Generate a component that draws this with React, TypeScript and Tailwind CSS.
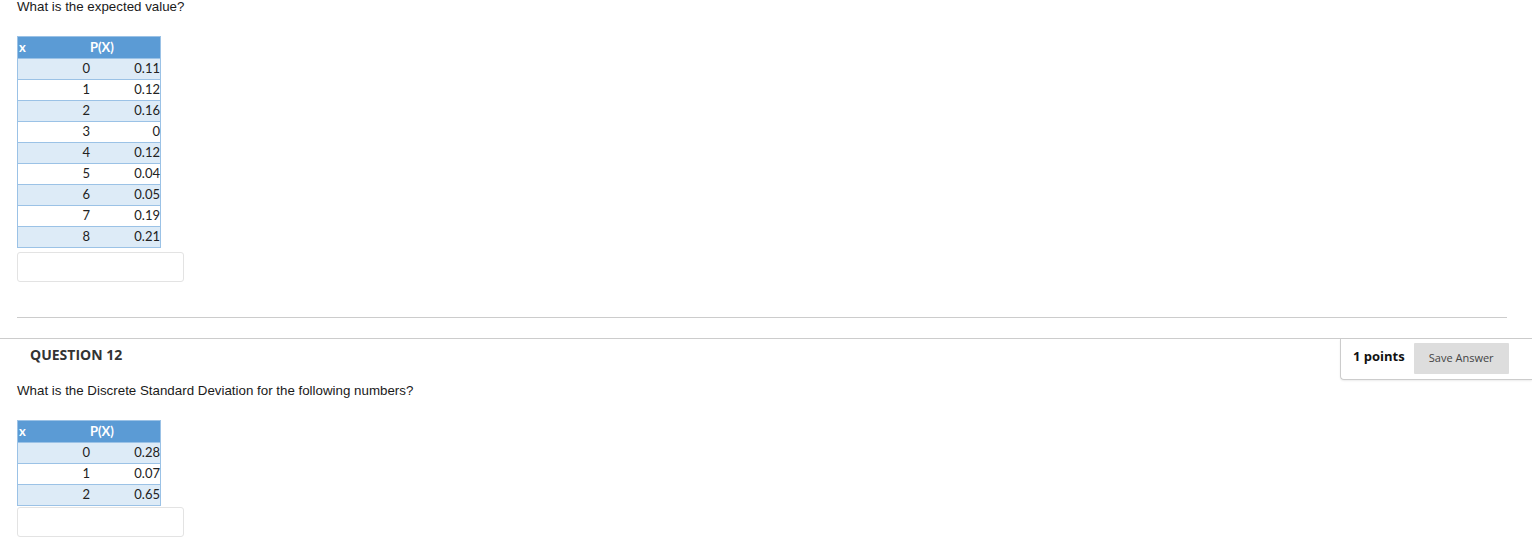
import React from "react";

const t1: [string, string][] = [
  ["0", "0.11"], ["1", "0.12"], ["2", "0.16"], ["3", "0"], ["4", "0.12"],
  ["5", "0.04"], ["6", "0.05"], ["7", "0.19"], ["8", "0.21"],
];
const t2: [string, string][] = [["0", "0.28"], ["1", "0.07"], ["2", "0.65"]];

function PTable({ rows }: { rows: [string, string][] }) {
  return (
    <div className="w-[144px] border border-[#9bc2e6] text-[13px] text-[#222] font-['Lato','Open_Sans',sans-serif]">
      <div className="flex h-[21px] items-center bg-[#5b9bd5] font-bold text-white">
        <div className="w-[72px] pl-[1px]">x</div>
        <div className="pl-[0px]">P(X)</div>
      </div>
      {rows.map(([x, p], i) => (
        <div
          key={i}
          className={
            "flex h-[21px] items-center border-t border-[#9bc2e6] " +
            (i % 2 === 0 ? "bg-[#ddebf7]" : "bg-white")
          }
        >
          <div className="w-[72px] text-right">{x}</div>
          <div className="flex-1 text-right">{p}</div>
        </div>
      ))}
    </div>
  );
}

function AnswerBox() {
  return <div className="h-[30px] w-[167px] rounded-[3px] border border-[#e3e3e3] bg-white" />;
}

export default function App() {
  return (
    <div className="relative w-[1532px] h-[542px] overflow-hidden bg-white font-['Liberation_Sans',Arial,sans-serif] text-[#222]">
      <div className="px-[17px]">
        <div className="h-[16px] text-[13.33px] leading-[14px] text-[#1a1a1a]">What is the expected value?</div>
        <div className="mt-[20px]">
          <PTable rows={t1} />
        </div>
        <div className="mt-[4px]">
          <AnswerBox />
        </div>
        <div className="mt-[35px] h-[1px] w-[1490px] bg-[#cccccc]" />
      </div>
      <div className="mt-[20px] flex border-t border-[#cccccc]">
        <div className="flex-1 pl-[30px] pt-[5px] font-['Open_Sans',sans-serif] text-[14px] font-bold text-[#333]">
          QUESTION 12
        </div>
        <div className="flex h-[41px] w-[192px] items-center rounded-bl-[4px] border-b border-l border-[#cccccc] pl-[12px] shadow-[0_1px_2px_rgba(0,0,0,0.08)]">
          <span className="mb-[4px] font-['Open_Sans',sans-serif] text-[13px] font-bold text-[#111]">1 points</span>
          <button className="ml-[9px] mb-[2px] h-[31px] w-[95px] rounded-[1px] bg-[#dddddd] font-['Open_Sans',sans-serif] text-[11px] text-[#444]">
            Save Answer
          </button>
        </div>
      </div>
      <div className="px-[17px]">
        <div className="mt-[4px] h-[16px] text-[13.33px] leading-[14px] text-[#1a1a1a]">
          What is the Discrete Standard Deviation for the following numbers?
        </div>
        <div className="mt-[20px]">
          <PTable rows={t2} />
        </div>
        <div className="mt-[1px]">
          <AnswerBox />
        </div>
      </div>
    </div>
  );
}
